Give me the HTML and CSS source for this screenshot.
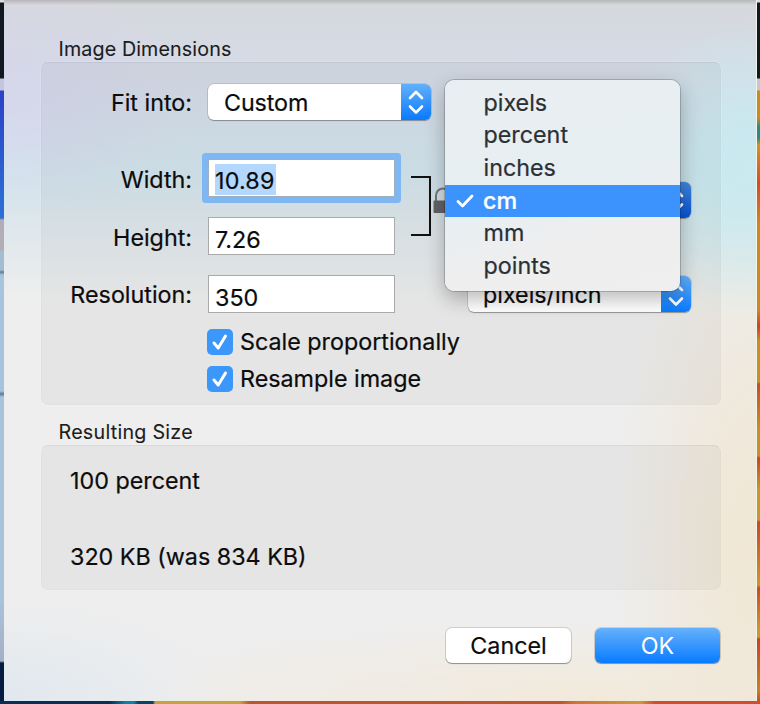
FILE: index.html
```html
<!DOCTYPE html>
<html lang="en">
<head>
<meta charset="utf-8">
<title>Image Dimensions</title>
<link rel="stylesheet" href="styles.css">
</head>
<body>
<main class="dialog">
  <h2 class="group-title dims-title">Image Dimensions</h2>
  <section class="group dims">
    <div class="form">
      <label class="label fit-label">Fit into:</label>
      <div class="popup fit"><span class="value custom">Custom</span><span class="stepper"><svg viewBox="0 0 30 37"><path d="M9 14L15 8L21 14M9 22.500L15 28.500L21 22.500"/></svg></span></div>
      <label class="label row-w">Width:</label>
      <div class="field focused row-w"><span class="selection">10.89</span></div>
      <svg class="link" viewBox="0 0 38 62"><path class="bracket" d="M0 2H19V60H0"/><path class="shackle" d="M25 27V20.500a7 7 0 0 1 14 0V27"/><rect class="body" x="22.500" y="25.500" width="19" height="12.500" rx="1"/></svg>
      <div class="popup units row-w"><span class="stepper dark"><svg viewBox="0 0 30 37"><path d="M9 14L15 8L21 14M9 22.500L15 28.500L21 22.500"/></svg></span></div>
      <label class="label row-h">Height:</label>
      <div class="field row-h"><span>7.26</span></div>
      <label class="label row-r resolution">Resolution:</label>
      <div class="field row-r"><span>350</span></div>
      <div class="popup density row-r"><span class="value">pixels/inch</span><span class="stepper"><svg viewBox="0 0 30 37"><path d="M9 14L15 8L21 14M9 22.500L15 28.500L21 22.500"/></svg></span></div>
    </div>
    <div class="checks">
      <div class="check"><svg viewBox="0 0 26 26"><rect width="26" height="26" rx="5"/><path d="M7 14L11.200 19L18.500 7"/></svg><span class="scale">Scale proportionally</span></div>
      <div class="check"><svg viewBox="0 0 26 26"><rect width="26" height="26" rx="5"/><path d="M7 14L11.200 19L18.500 7"/></svg><span class="resample">Resample image</span></div>
    </div>
  </section>
  <h2 class="group-title size-title">Resulting Size</h2>
  <section class="group size">
    <p class="percent">100 percent</p>
    <p class="bytes">320 KB (was 834 KB)</p>
  </section>
  <footer class="actions">
    <div class="button">Cancel</div>
    <div class="button primary">OK</div>
  </footer>
  <ul class="menu">
    <li>pixels</li>
    <li>percent</li>
    <li>inches</li>
    <li class="active"><svg viewBox="0 0 20 16"><path d="M3 8.500L7.500 13L17 3"/></svg>cm</li>
    <li>mm</li>
    <li>points</li>
  </ul>
</main>
</body>
</html>
```
FILE: styles.css
```css
* { box-sizing: border-box; }
body {
  margin: 0;
  width: 760px;
  height: 704px;
  overflow: hidden;
  padding: 0 3px 3px 4px;
  font: 23.3px/32px Inter, "Liberation Sans", sans-serif;
  color: #0c0c0c;
  -webkit-text-stroke: .2px currentColor;
  background:
    linear-gradient(90deg, #063154 0 110px, #0784a8 126px 134px, #064466 138px 153px, #c6a33b 155px 240px, #bb562d 250px 560px, #d27335 575px, #c99a3c 640px, #d24d2f 655px) 0 701px / 760px 3px no-repeat,
    linear-gradient(#ddd 0 2px, #111a20 3px 78px, #c3c8c9 79px 90px, #c78b24 91px 118px, #298c7d 127px 138px, #ce9525 145px, #d34c24 184px, #c98b20 225px 310px, #d0411f 326px, #ca901f 342px 382px, #ca4b22 384px, #c99022 430px 456px, #cd4521 458px, #c79a28 490px 520px, #cb4823 522px, #ca9823 585px, #ce4821 588px, #c99b25 630px 637px, #cb4121 639px, #c38422 690px, #c64320) 757px 0 / 3px 704px no-repeat,
    linear-gradient(#ddd 0 2px, #111820 3px 78px, #c4c5df 79px 90px, #2b41c7 91px, #2b72d5 218px, #b5adb5 220px 250px, #a5bdd3 251px 270px, #667b95 272px, #a7c4de 275px 391px, #617992 394px, #a9c3da 397px 600px, #a5afc4 661px, #061b40 663px) 0 0 / 4px 704px no-repeat;
}
.dialog {
  position: relative;
  width: 753px;
  height: 701px;
  border-right: 1px solid #f2f4ec;
  padding: 34px 36px 0 37px;
  background:
    linear-gradient(rgba(150,150,150,.5), rgba(200,200,200,0) 5px),
    radial-gradient(ellipse 150px 150px at 100% 170px, #c9eaf0 0, rgba(201,234,240,.7) 40%, rgba(201,234,240,0) 100%),
    radial-gradient(ellipse 140px 370px at 100% 550px, #f0e7d3 0, rgba(240,231,214,.75) 40%, rgba(240,232,220,0) 100%),
    radial-gradient(ellipse 220px 100px at 0 100%, #e0e8ef, rgba(224,232,239,0)),
    radial-gradient(ellipse 500px 80px at 80% 100%, rgba(243,232,212,.8), rgba(243,235,219,0)),
    radial-gradient(ellipse 190px 120px at 0 100px, rgba(214,211,238,.6), rgba(214,211,238,0)),
    linear-gradient(#d6d8dd 0, #d5dce8 85px, #d3e5ed 175px, #e0e8eb 235px, #eeeeee 300px, #eee 100%);
}
.group-title {
  margin: 0 0 0 17.5px;
  height: 28px;
  font-size: 19.7px;
  line-height: 31px;
  font-weight: 400;
  letter-spacing: .12px;
  color: #1c1c1c;
  -webkit-text-stroke: .1px currentColor;
}
.size-title { letter-spacing: .25px; }
.group {
  width: 680px;
  border: 1px solid rgba(0,0,0,.02);
  border-top-color: rgba(0,0,0,.06);
  border-radius: 7px;
  background: rgba(0,0,0,.035);
  box-shadow: 0 0 0 1px rgba(255,255,255,.12);
}
.dims { height: 343px; padding: 21px 28px 0; }
.form {
  display: grid;
  grid-template-columns: 122px 187px 20px 223px;
  grid-template-rows: 55px 38px 38px 38px;
  row-gap: 20px;
  column-gap: 16px;
}
.label { text-align: right; line-height: 41px; white-space: nowrap; justify-self: end; grid-column: 1; }
.fit-label { line-height: 37px; }
.label.row-w { line-height: 41px; }
.label.row-r { line-height: 40px; }
.row-w { grid-row: 2; }
.row-h { grid-row: 3; }
.row-r { grid-row: 4; }
.popup {
  display: flex;
  justify-content: space-between;
  width: 223px;
  height: 36px;
  border-radius: 6px;
  background: #fff;
  box-shadow: 0 1px 1px rgba(0,0,0,.28), 0 0 0 .5px rgba(0,0,0,.2);
  overflow: hidden;
}
.fit { grid-column: 2 / 4; }
.units, .density { grid-column: 4; margin-left: 21px; }
.units { margin-top: 23px; justify-content: flex-end; }
.density { margin-top: 1px; }
.value { padding-left: 15px; line-height: 38px; }
.custom { padding-left: 16px; letter-spacing: -.1px; }
.stepper { width: 30px; height: 36px; background: linear-gradient(#63b0fb, #087aff); }
.stepper.dark { background: linear-gradient(#3f86dd, #0651d2); }
.stepper svg { display: block; fill: none; stroke: #fff; stroke-width: 2.6; stroke-linecap: round; stroke-linejoin: round; }
.field {
  grid-column: 2;
  height: 38px;
  padding: 5px 6px 0;
  border: 1px solid #aaa;
  background: #fff;
  line-height: 33px;
}
.focused { box-shadow: 0 0 0 6px #7fb7f2; border-color: #9eafbf; border-radius: 1px; padding-top: 4px; }
.selection { display: block; width: 61px; height: 31px; line-height: 33px; letter-spacing: .2px; background: #b4d8fd; }
.link { grid-column: 3; grid-row: 2 / 4; width: 38px; height: 62px; margin-top: 16px; overflow: visible; fill: none; }
.bracket { stroke: #111; stroke-width: 2; }
.shackle { stroke: #737579; stroke-width: 2; }
.body { fill: #616266; }
.checks { margin-top: 11px; padding-left: 137px; }
.check { display: flex; height: 36.500px; align-items: center; gap: 7px; white-space: nowrap; }
.check svg { width: 26px; height: 26px; flex: none; }
.check rect { fill: #3c97fa; }
.check path { fill: none; stroke: #fff; stroke-width: 3; stroke-linecap: round; stroke-linejoin: round; }
.size-title { margin-top: 12px; }
.size { height: 145px; padding: 19px 28px; }
.size p { margin: 0 0 44px; }
.actions { display: flex; justify-content: flex-end; gap: 24px; margin-top: 38px; }
.button {
  width: 125px;
  height: 35px;
  border-radius: 6px;
  background: #fff;
  box-shadow: 0 1px 1px rgba(0,0,0,.3), 0 0 0 1px rgba(0,0,0,.13);
  line-height: 36px;
  text-align: center;
}
.primary { background: linear-gradient(#66b1fb, #087bff); color: #fff; -webkit-text-stroke: 0; }
.menu {
  position: absolute;
  left: 441px;
  top: 80px;
  width: 235px;
  height: 211px;
  margin: 0;
  padding: 6.500px 0 0;
  list-style: none;
  border-radius: 9px;
  background: linear-gradient(165deg, #e9eef2 0, #e7eff2 50%, #eeeeef 70%, #efefef);
  box-shadow: 0 0 0 1px rgba(0,0,0,.18), 0 8px 20px rgba(0,0,0,.28);
  color: #2b3034;
}
.menu li { height: 32.700px; padding-left: 38.500px; line-height: 32px; }
.menu .active { display: flex; padding-left: 10px; background: #3d93fd; color: #fff; font-weight: 500; }
.menu svg { width: 20px; height: 16px; margin: 8px 8px 0 0; fill: none; stroke: #fff; stroke-width: 2.800; stroke-linecap: round; stroke-linejoin: round; }
```
